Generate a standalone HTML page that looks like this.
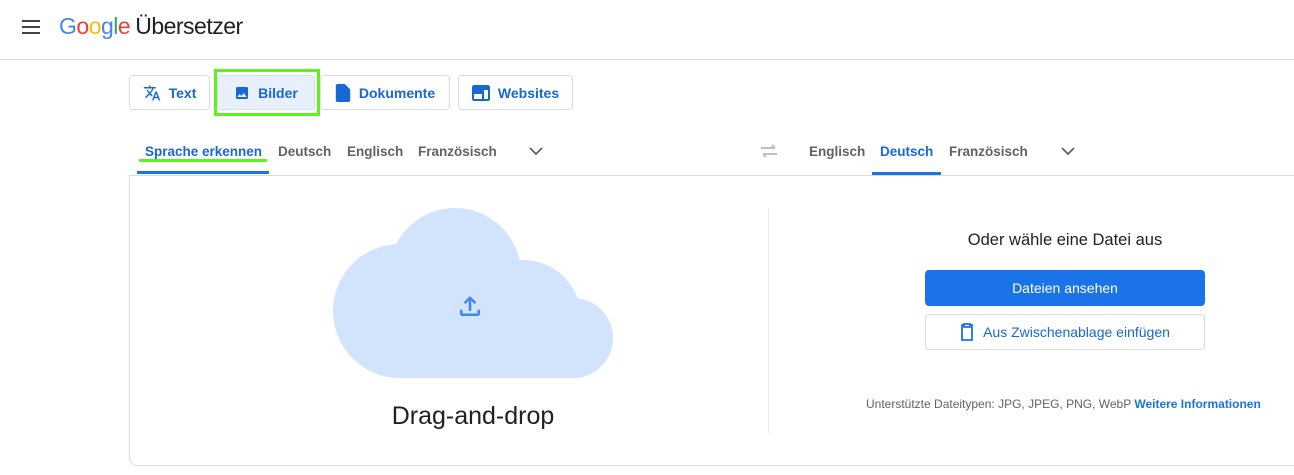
<!DOCTYPE html>
<html><head><style>
body{margin:0;width:1294px;height:475px;background:#fff;font-family:"Liberation Sans",Arial,sans-serif;position:relative;overflow:hidden}
.a{position:absolute}
.btn{position:absolute;top:75px;height:35px;border:1px solid #dadce0;border-radius:4px;box-sizing:border-box;font-size:14px;font-weight:bold;display:flex;align-items:center;justify-content:center;gap:8px;color:#1967d2}
.tab{position:absolute;top:144px;font-size:13.5px;font-weight:bold;color:#5f6368}
</style></head><body>
<div class="a" style="left:22px;top:20px;width:18px;height:2px;background:#444;box-shadow:0 6px 0 #444,0 12px 0 #444"></div>
<div class="a" style="left:59px;top:13px;font-size:23px;letter-spacing:-0.5px"><span style="color:#4285f4">G</span><span style="color:#ea4335">o</span><span style="color:#fbbc05">o</span><span style="color:#4285f4">g</span><span style="color:#34a853">l</span><span style="color:#ea4335">e</span><span style="color:#202124;margin-left:5px">Übersetzer</span></div>
<div class="a" style="left:0;top:59px;width:1294px;height:1px;background:#dadce0"></div>

<div class="btn" style="left:129px;width:81px"><svg width="18" height="18" viewBox="0 0 24 24"><path fill="#1967d2" d="M12.87 15.07l-2.54-2.51.03-.03A17.5 17.5 0 0014.07 6H17V4h-7V2H8v2H1v2h11.17C11.5 7.920 10.44 9.75 9 11.35 8.07 10.32 7.3 9.19 6.69 8h-2c.73 1.63 1.73 3.17 2.98 4.56l-5.09 5.02L4 19l5-5 3.110 3.11.76-2.04zM18.5 10h-2L12 22h2l1.12-3h4.75L21 22h2l-4.5-12zm-2.62 7l1.62-4.33L19.12 17h-3.24z"/></svg>Text</div>
<div class="btn" style="left:217px;width:98px;background:#e8f0fe"><svg width="16" height="16" viewBox="0 0 24 24"><path fill="#1967d2" d="M21 19V5c0-1.1-.9-2-2-2H5c-1.1 0-2 .9-2 2v14c0 1.1.9 2 2 2h14c1.1 0 2-.9 2-2zM8.5 13.5l2.5 3 3.5-4.5 4.5 6H5l3.5-4.5z"/></svg>Bilder</div>
<div class="a" style="left:214px;top:69px;width:100px;height:41px;border:3px solid #5ef01f"></div>
<div class="btn" style="left:320px;width:130px"><svg width="16" height="18" viewBox="0 0 16 20"><path fill="#1967d2" d="M2 0h8l6 6v12c0 1.1-.9 2-2 2H2C.9 20 0 19.1 0 18V2C0 .9.9 0 2 0z"/></svg>Dokumente</div>
<div class="btn" style="left:458px;width:115px"><svg width="18" height="16" viewBox="0 0 18 16"><path fill="#1967d2" d="M0 2C0 1 1 0 2 0h14c1 0 2 1 2 2v12c0 1-1 2-2 2H2c-1 0-2-1-2-2zM2 5v9h8V9H2zm10 0v9h4V5z"/></svg>Websites</div>

<div class="tab" style="left:145px;color:#1967d2">Sprache erkennen</div>
<div class="a" style="left:137px;top:171px;width:132px;height:3px;background:#1a73e8"></div>
<div class="a" style="left:139px;top:159px;width:128px;height:3px;background:#5ef01f"></div>
<div class="tab" style="left:278px">Deutsch</div>
<div class="tab" style="left:347px">Englisch</div>
<div class="tab" style="left:418px">Französisch</div>
<svg class="a" style="left:528px;top:145px" width="16" height="12" viewBox="0 0 16 12"><path d="M2 3l6 6 6-6" stroke="#5f6368" stroke-width="1.8" fill="none"/></svg>
<svg class="a" style="left:759px;top:143px" width="20" height="16" viewBox="0 0 20 16"><path d="M2 5h14M13 2l3 3M18 11H4M7 14l-3-3" stroke="#bdc1c6" stroke-width="2" fill="none"/></svg>
<div class="tab" style="left:809px">Englisch</div>
<div class="tab" style="left:880px;color:#1967d2">Deutsch</div>
<div class="a" style="left:872px;top:172px;width:69px;height:3px;background:#1a73e8"></div>
<div class="tab" style="left:949px">Französisch</div>
<svg class="a" style="left:1060px;top:145px" width="16" height="12" viewBox="0 0 16 12"><path d="M2 3l6 6 6-6" stroke="#5f6368" stroke-width="1.8" fill="none"/></svg>
<div class="a" style="left:129px;top:175px;width:1165px;height:1px;background:#dadce0"></div>

<div class="a" style="left:129px;top:176px;width:1180px;height:290px;border:1px solid #dadce0;border-top:none;border-radius:0 0 8px 8px;box-sizing:border-box"></div>
<div class="a" style="left:768px;top:208px;width:1px;height:226px;background:#e8eaed"></div>

<svg class="a" style="left:333px;top:208px" width="280" height="170" viewBox="0 0 280 170">
<g fill="#d2e3fc"><circle cx="122" cy="66" r="66"/><circle cx="67" cy="103" r="67"/><circle cx="190" cy="110" r="58"/><circle cx="240" cy="130" r="40"/><rect x="67" y="100" width="173" height="70"/></g>
</svg>
<svg class="a" style="left:455px;top:291px" width="30" height="30" viewBox="0 0 24 24"><path fill="#4285f4" d="M18 15v3H6v-3H4v3c0 1.1.9 2 2 2h12c1.1 0 2-.9 2-2v-3h-2zM7 9l1.41 1.41L11 7.83V16h2V7.83l2.59 2.58L17 9l-5-5-5 5z"/></svg>
<div class="a" style="left:323px;top:402px;width:300px;text-align:center;font-size:25px;color:#202124">Drag-and-drop</div>

<div class="a" style="left:915px;top:231px;width:300px;text-align:center;font-size:16.5px;color:#202124">Oder wähle eine Datei aus</div>
<div class="a" style="left:925px;top:270px;width:280px;height:36px;background:#1a73e8;border-radius:4px;color:#fff;font-size:14px;text-align:center;line-height:36px">Dateien ansehen</div>
<div class="a" style="left:925px;top:314px;width:280px;height:36px;border:1px solid #dadce0;border-radius:4px;box-sizing:border-box;color:#1967d2;font-size:14px;display:flex;align-items:center;justify-content:center;gap:9px"><svg width="14" height="18" viewBox="0 0 14 18"><path d="M4 2H2v15h10V2H10M4 1h6v3H4z" stroke="#1a73e8" stroke-width="1.8" fill="none"/></svg>Aus Zwischenablage einfügen</div>
<div class="a" style="left:866px;top:397px;font-size:12px;color:#5f6368;white-space:nowrap">Unterstützte Dateitypen: JPG, JPEG, PNG, WebP <b style="color:#1a73e8">Weitere Informationen</b></div>
</body></html>
